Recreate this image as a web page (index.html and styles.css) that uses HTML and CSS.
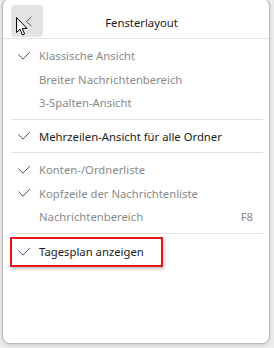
FILE: index.html
```html
<!DOCTYPE html>
<html lang="de">
<head>
    <meta charset="UTF-8">
    <title>Fensterlayout</title>
    <link rel="stylesheet" href="styles.css">
</head>
<body>
    <div class="menu">
        <div class="menu-header">
            <button class="back-btn">
                <svg class="chevron" width="8" height="12" viewBox="0 0 8 12">
                    <path d="M6.5 0.8 L1.5 5.5 L6.5 10.2" fill="none" stroke="#555" stroke-width="1"/>
                </svg>
                <svg class="cursor" width="13" height="20" viewBox="0 0 13 20">
                    <path d="M0.5 0.5 L0.5 15.5 L4 12.2 L6.4 18 L8.6 17 L6.3 11.4 L11 11.4 Z" fill="#fff" stroke="#000" stroke-width="1"/>
                </svg>
            </button>
            <h3 class="menu-title">Fensterlayout</h3>
        </div>

        <ul class="menu-group">
            <li class="menu-item muted"><svg class="check" width="13" height="10" viewBox="0 0 13 10"><path d="M0.5 3.5 L5 8.2 L12 0.8"/></svg>Klassische Ansicht</li>
            <li class="menu-item muted">Breiter Nachrichtenbereich</li>
            <li class="menu-item muted">3-Spalten-Ansicht</li>
        </ul>

        <ul class="menu-group">
            <li class="menu-item"><svg class="check" width="13" height="10" viewBox="0 0 13 10"><path d="M0.5 3.5 L5 8.2 L12 0.8"/></svg>Mehrzeilen-Ansicht für alle Ordner</li>
        </ul>

        <ul class="menu-group">
            <li class="menu-item muted"><svg class="check" width="13" height="10" viewBox="0 0 13 10"><path d="M0.5 3.5 L5 8.2 L12 0.8"/></svg>Konten-/Ordnerliste</li>
            <li class="menu-item muted"><svg class="check" width="13" height="10" viewBox="0 0 13 10"><path d="M0.5 3.5 L5 8.2 L12 0.8"/></svg>Kopfzeile der Nachrichtenliste</li>
            <li class="menu-item muted">Nachrichtenbereich <span class="shortcut">F8</span></li>
        </ul>

        <ul class="menu-group last">
            <li class="menu-item highlight"><svg class="check" width="13" height="10" viewBox="0 0 13 10"><path d="M0.5 3.5 L5 8.2 L12 0.8"/></svg>Tagesplan anzeigen</li>
        </ul>
    </div>
</body>
</html>
```

FILE: styles.css
```css
* {
    margin: 0;
    padding: 0;
    box-sizing: border-box;
    font-family: 'Noto Sans', 'Open Sans', sans-serif;
}

body {
    background-color: #ececec;
    width: 274px;
    height: 348px;
    overflow: hidden;
    padding: 0 4px 3px 2px;
}

.menu {
    height: 346px;
    margin-top: -2px;
    padding-top: 2px;
    background-color: #fff;
    border: 1px solid #b9b9b9;
    border-radius: 8px;
    box-shadow: 0 1px 4px rgba(0, 0, 0, 0.15);
}

.menu-header {
    display: flex;
    align-items: flex-start;
    height: 38px;
    border-bottom: 1px solid #e0e0e0;
    padding: 4px 0 0 8px;
}

.back-btn {
    position: relative;
    width: 32px;
    height: 32px;
    border: none;
    border-radius: 4px;
    background-color: #e4e4e4;
}

.chevron {
    position: absolute;
    left: 14px;
    top: 11px;
}

.cursor {
    position: absolute;
    left: 5px;
    top: 12px;
}

.menu-title {
    flex: 1;
    text-align: center;
    font-size: 11.3px;
    font-weight: normal;
    color: #1a1a1a;
    margin: 10px 29px 0 0;
}

.menu-group {
    list-style: none;
    margin: 0 6px 0 8px;
    padding: 5px 0 4px;
    border-bottom: 1px solid #e0e0e0;
}

.menu-group.last {
    border-bottom: none;
    padding-top: 3px;
}

.menu-item {
    position: relative;
    display: flex;
    align-items: center;
    height: 23.5px;
    padding-left: 28px;
    padding-right: 10px;
    font-size: 11.3px;
    color: #1c1c1c;
}

.menu-item.muted {
    color: #8a8a8a;
}

.check {
    position: absolute;
    left: 7px;
    top: 6.5px;
}

.check path {
    fill: none;
    stroke: #4f4e6e;
    stroke-width: 1;
}

.shortcut {
    margin-left: auto;
}

.highlight {
    margin-left: -1px;
    width: 153px;
    height: 30px;
    border: 2px solid #e8141c;
    box-shadow: 1px 2px 3px rgba(0, 0, 0, 0.25);
    padding-left: 27px;
}

.highlight .check {
    left: 6px;
    top: 8px;
}
```
